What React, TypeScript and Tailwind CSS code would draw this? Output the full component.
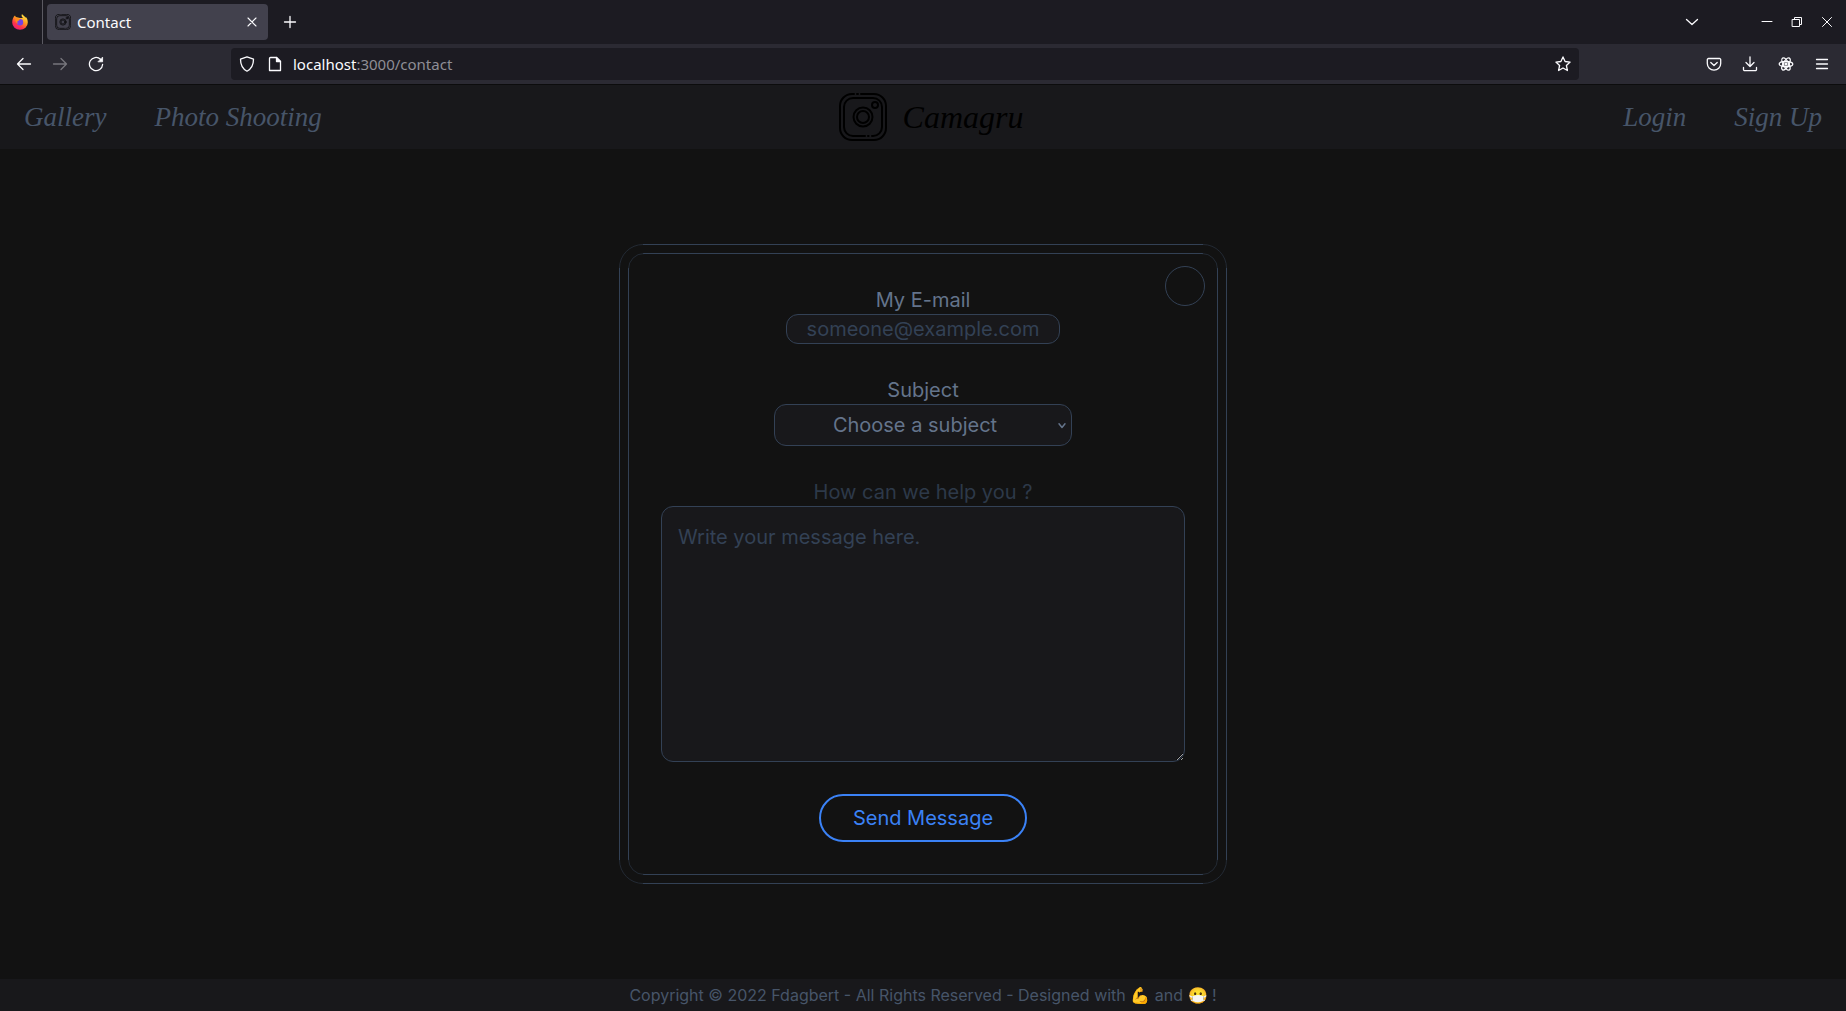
import React from 'react';

function CameraLogo({ className }: { className: string }) {
  return (
    <svg viewBox="0 0 48 48" fill="none" stroke="currentColor" strokeWidth="2" strokeLinecap="round" className={className} aria-hidden="true">
      <path d="M15 1H13A12 12 0 0 0 1 13V35A12 12 0 0 0 13 47H35A12 12 0 0 0 47 35V13A12 12 0 0 0 35 1H22M18 1h1" />
      <path d="M26 43H14A9 9 0 0 1 5 34V14A9 9 0 0 1 14 5H34A9 9 0 0 1 43 14V34A9 9 0 0 1 34 43H33M29 43h.6" />
      <circle cx="24" cy="24" r="9.5" />
      <circle cx="24" cy="24" r="6" />
      <circle cx="36" cy="12" r="3" />
    </svg>
  );
}

function Firefox() {
  return (
    <svg viewBox="0 0 16 16" className="size-4" aria-hidden="true">
      <defs>
        <linearGradient id="flame" x1="0.8" y1="0" x2="0.2" y2="1">
          <stop offset="0" stopColor="#fff44f" />
          <stop offset="0.4" stopColor="#ff9a1f" />
          <stop offset="0.7" stopColor="#ff3647" />
          <stop offset="1" stopColor="#e31587" />
        </linearGradient>
      </defs>
      <path d="M10 0C9 2 10 3 11 4L8 4 4 3C3.500 2.500 3 2 3 1.500 1.500 2.500.2 5.500.2 8.500A7.800 7.300 0 0 0 15.800 8.500C15.800 6 15 4 13.500 2.800L13.700 4C12.800 2 10.800 1.500 10 0Z" fill="url(#flame)" />
      <circle cx="8" cy="8.200" r="3.200" fill="#7542e5" />
      <path d="M3.500 5C5 4 7 4.500 8 5.800 7 6 6.500 7 5.500 7.200 5 8 5.500 9 6.500 9.500 4.500 9.500 3 7.500 3.500 5Z" fill="#ff8a16" />
    </svg>
  );
}

const icon = {
  viewBox: '0 0 16 16',
  fill: 'none',
  stroke: 'currentColor',
  strokeWidth: 1.3,
  strokeLinecap: 'round' as const,
  strokeLinejoin: 'round' as const,
  'aria-hidden': true,
};

function IconButton({ label, dim, children }: { label: string; dim?: boolean; children: React.ReactNode }) {
  return (
    <button type="button" aria-label={label} className={dim ? 'flex size-9 items-center justify-center text-[#77767d]' : 'flex size-9 items-center justify-center text-[#fbfbfe]'}>
      <svg {...icon} className="size-4">{children}</svg>
    </button>
  );
}

function WindowButton({ label, d }: { label: string; d: string }) {
  return (
    <button type="button" aria-label={label} className="flex h-9 w-[30px] items-center justify-center">
      <svg {...icon} strokeWidth={1} className="size-4"><path d={d} /></svg>
    </button>
  );
}

function BrowserChrome() {
  return (
    <header className="text-[15px] font-['Noto_Sans',sans-serif] text-[#fbfbfe]">
      <div className="flex h-11 items-center bg-[#1c1b22]">
        <div className="flex h-11 w-[43px] items-center border-r border-[#5b5a62] pl-3">
          <Firefox />
        </div>
        <div className="ml-1 flex h-9 w-[221px] items-center rounded bg-[#42414d] pl-2 pr-1">
          <CameraLogo className="size-4 text-black" />
          <span className="ml-1.5 flex-1">Contact</span>
          <button type="button" aria-label="Close tab" className="flex size-6 items-center justify-center">
            <svg {...icon} strokeWidth={1.1} className="size-4"><path d="m4 4 8 8m0-8-8 8" /></svg>
          </button>
        </div>
        <div className="ml-1 flex-1">
          <IconButton label="New tab"><path d="M8 2.500v11M2.500 8h11" /></IconButton>
        </div>
        <IconButton label="List all tabs"><path d="m2.500 5.500 5.500 5 5.500-5" /></IconButton>
        <div className="ml-[42px] mr-1 flex">
          <WindowButton label="Minimize" d="M3 7.500h10" />
          <WindowButton label="Restore" d="M3.500 5.500h7v7h-7zM5.500 5.500v-2h7v7h-2" />
          <WindowButton label="Close window" d="m3.500 3.500 9 9m0-9-9 9" />
        </div>
      </div>
      <div className="flex h-[41px] items-center border-b border-[#0c0c0d] bg-[#2b2a33] px-1.5">
        <IconButton label="Back"><path d="M14.500 8H1.500M7 2.500 1.500 8 7 13.500" /></IconButton>
        <IconButton label="Forward" dim><path d="M1.500 8h13M9 2.500 14.500 8 9 13.500" /></IconButton>
        <IconButton label="Reload"><path d="M12.500 3.200A6.600 6.600 0 1 0 14.600 8.500" /><path d="M14.600 1.500v4.300h-4.300z" fill="currentColor" strokeWidth={0.8} /></IconButton>
        <div className="mx-[117px] flex h-8 flex-1 items-center rounded bg-[#1c1b22] pl-2">
          <svg {...icon} className="size-4"><path d="M8 .8 14.500 3.200C14.500 9 13 12.500 8 15.200 3 12.500 1.500 9 1.500 3.200Z" /></svg>
          <svg {...icon} className="ml-3 size-4"><path d="M3.500 1.500h6l4 4v9h-11v-12a1 1 0 0 1 1-1Z" /><path d="M9.500 1.500v4h4z" fill="currentColor" /></svg>
          <div className="ml-2.5 flex-1">
            localhost<span className="text-[#8f8e96]">:3000/contact</span>
          </div>
          <button type="button" aria-label="Bookmark this page" className="flex size-8 items-center justify-center">
            <svg {...icon} className="size-4"><path d="m8 .9 2.100 4.600 5 .6-3.700 3.400 1 5L8 12l-4.400 2.500 1-5L.9 6.100l5-.6Z" /></svg>
          </button>
        </div>
        <IconButton label="Save to Pocket"><path d="M2.500 2.500h11a1.200 1.200 0 0 1 1.200 1.200V7.500a6.700 6.700 0 0 1-13.400 0V3.700a1.200 1.200 0 0 1 1.200-1.200ZM4.800 6.500 8 9.500l3.200-3" /></IconButton>
        <IconButton label="Downloads"><path d="M8 .8v9.700M4 6.500l4 4 4-4M1.500 11.500v2a1.200 1.200 0 0 0 1.200 1.200h10.600a1.200 1.200 0 0 0 1.200-1.200v-2" /></IconButton>
        <IconButton label="React Developer Tools">
          <ellipse cx="8" cy="8" rx="6.800" ry="2.700" />
          <ellipse cx="8" cy="8" rx="6.800" ry="2.700" transform="rotate(60 8 8)" />
          <ellipse cx="8" cy="8" rx="6.800" ry="2.700" transform="rotate(120 8 8)" />
          <circle cx="8" cy="8" r="1" fill="currentColor" />
        </IconButton>
        <IconButton label="Open menu"><path d="M2.500 3.500h11M2.500 8h11M2.500 12.500h11" /></IconButton>
      </div>
    </header>
  );
}

function NavLink({ children }: { children: React.ReactNode }) {
  return <a href="#" className="text-[27px] leading-10 text-[#475569]">{children}</a>;
}

function SiteNav() {
  return (
    <nav className="grid h-16 grid-cols-[1fr_auto_1fr] items-center bg-[#18181b] px-6 font-['Liberation_Serif',serif] italic">
      <div className="flex gap-12">
        <NavLink>Gallery</NavLink>
        <NavLink>Photo Shooting</NavLink>
      </div>
      <a href="#" className="flex items-center gap-4 pl-4 text-black">
        <CameraLogo className="size-12" />
        <span className="text-[32px] leading-10">Camagru</span>
      </a>
      <div className="flex justify-end gap-12">
        <NavLink>Login</NavLink>
        <NavLink>Sign Up</NavLink>
      </div>
    </nav>
  );
}

const field = 'rounded-xl border border-[#334155] bg-[#18181b] outline-none placeholder:text-[#334155] placeholder:opacity-100';

function ContactCard() {
  return (
    <div className="relative rounded-3xl border border-[#334155] p-2">
      <form className="flex flex-col items-center rounded-2xl border border-[#334155] p-8 text-xl text-[#64748b]">
        <label htmlFor="email">My E-mail</label>
        <input id="email" type="email" placeholder="someone@example.com" className={`${field} h-[30px] w-[274px] text-center`} />
        <label htmlFor="subject" className="mt-8">Subject</label>
        <div className="relative">
          <select id="subject" className={`${field} h-[42px] w-[298px] appearance-none pl-4 pr-8 text-center`}>
            <option>Choose a subject</option>
          </select>
          <svg {...icon} className="pointer-events-none absolute right-1 top-4 size-3"><path d="m4 5 4 5 4-5" strokeWidth={2} /></svg>
        </div>
        <label htmlFor="message" className="mt-8 text-[#2d3949]">How can we help you ?</label>
        <textarea id="message" placeholder="Write your message here." className={`${field} block h-64 w-[524px] p-4`} />
        <button type="submit" className="mt-8 h-12 rounded-full border-2 border-[#3b82f6] px-8 text-[#3b82f6]">Send Message</button>
      </form>
      <span className="pointer-events-none absolute -left-px -top-px size-6 bg-[#121212]/50" />
      <span className="pointer-events-none absolute -right-px -top-px size-6 bg-[#121212]/50" />
      <span className="pointer-events-none absolute -bottom-px -left-px size-6 bg-[#121212]/50" />
      <span className="pointer-events-none absolute -bottom-px -right-px size-6 bg-[#121212]/50" />
      <button type="button" aria-label="Profile picture" className="absolute right-[21px] top-[21px] size-10 rounded-full border border-[#334155]" />
    </div>
  );
}

export default function App() {
  return (
    <div className="flex min-h-screen flex-col bg-[#121212] font-['Inter',sans-serif]">
      <BrowserChrome />
      <SiteNav />
      <main className="flex flex-1 items-center justify-center">
        <ContactCard />
      </main>
      <footer className="flex h-8 items-center justify-center bg-[#18181b] text-base text-[#475569]">
        Copyright © 2022 Fdagbert - All Rights Reserved - Designed with 💪 and 😷 !
      </footer>
    </div>
  );
}
